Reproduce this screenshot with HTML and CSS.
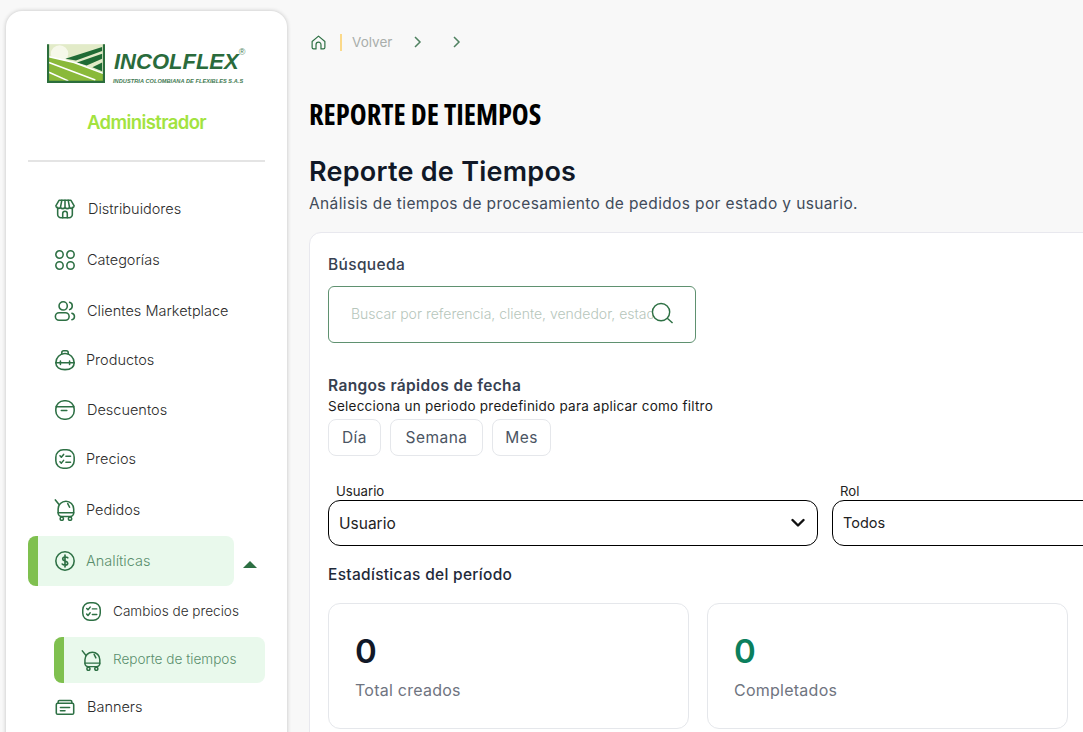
FILE: index.html
```html
<!DOCTYPE html>
<html lang="es">
<head>
<meta charset="utf-8">
<title>Reporte de Tiempos</title>
<link rel="stylesheet" href="styles.css">
</head>
<body>
<div class="app">
  <aside class="sidebar">
    <div class="brand">
      <svg class="brand-mark" viewBox="0 0 60 40" aria-hidden="true">
        <rect width="60" height="40" fill="#e2ebc8"/>
        <circle cx="13" cy="10" r="9" fill="#f6f8ea"/>
        <path d="M2 13 L28 19 L58 29 V38 H2Z" fill="#8ab93a"/>
        <path d="M19 15 L57 3 V7 L30 17Z M31 19 L57 10 V15 L41 22Z M47 24 L57 19 V28Z" fill="#1f6b35"/>
        <path d="M2 19 L50 37 M2 29 L22 38 M2 13 L28 19 L58 30" stroke="#fff" stroke-width="1.6" fill="none"/>
        <path d="M1 0V39H59V0" fill="none" stroke="#2b6e3c" stroke-width="2.4"/>
      </svg>
      <div class="brand-text">
        <div class="brand-name">INCOLFLEX<sup class="brand-reg">®</sup></div>
        <div class="brand-tag">INDUSTRIA COLOMBIANA DE FLEXIBLES S.A.S</div>
      </div>
    </div>
    <div class="role">Administrador</div>
    <hr class="rule">
    <nav class="nav">
      <a class="row">
        <svg class="ico" viewBox="0 0 24 24"><path d="M4 10V18a3.500 3.500 0 0 0 3.500 3.500h9A3.500 3.500 0 0 0 20 18V10"/><path d="M5.500 2.500h13L22 8.500a3 3 0 0 1-5 2 3.400 3.400 0 0 1-5 0 3.400 3.400 0 0 1-5 0 3 3 0 0 1-5-2Z"/><path d="M7 10.500 8.500 2.500M17 10.500 15.500 2.500M12 10.500V2.500"/><path d="M9.500 21.500V17a2.500 2.500 0 0 1 5 0v4.500"/></svg>
        <span class="lbl lbl-wide">Distribuidores</span>
      </a>
      <a class="row shift-1">
        <svg class="ico" viewBox="0 0 24 24"><circle cx="6" cy="6" r="4"/><circle cx="18" cy="6" r="4"/><circle cx="6" cy="18" r="4"/><circle cx="18" cy="18" r="4"/></svg>
        <span class="lbl">Categorías</span>
      </a>
      <a class="row shift-1">
        <svg class="ico" viewBox="0 0 24 24"><circle cx="10" cy="6.500" r="4.500"/><path d="M17 2.500a4.200 4.200 0 0 1 0 8"/><rect x="1.500" y="14" width="15" height="8" rx="4"/><path d="M19.500 14.500c4 1 3.500 6.500 0 7"/></svg>
        <span class="lbl">Clientes Marketplace</span>
      </a>
      <a class="row shift-back">
        <svg class="ico" viewBox="0 0 24 24"><path d="M2 15a10 10 0 0 1 20 0c0 5-4 7.500-10 7.500S2 20 2 15Z"/><path d="M8.500 5.800V4a2 2 0 0 1 2-2h3a2 2 0 0 1 2 2v1.800"/><path d="M2 15h20M7 13v4M17 13v4"/></svg>
        <span class="lbl lbl-tight">Productos</span>
      </a>
      <a class="row">
        <svg class="ico" viewBox="0 0 24 24"><rect x="2" y="2" width="20" height="20" rx="9"/><path d="M2.500 8.500h19M8 12.500h6"/></svg>
        <span class="lbl">Descuentos</span>
      </a>
      <a class="row shift-back">
        <svg class="ico" viewBox="0 0 24 24"><rect x="2" y="2" width="20" height="20" rx="8"/><path d="M6.500 8.500l1.500 1.500 2.500-3M6.500 15l1.500 1.500 2.500-3M13 9h5M13 15.500h5"/></svg>
        <span class="lbl lbl-tight">Precios</span>
      </a>
      <a class="row shift-1">
        <svg class="ico" viewBox="0 0 24 24"><path d="M1.500 1 5.500 6"/><path d="M4.500 11a8.500 8.500 0 0 1 17 0v4a4 4 0 0 1-4 4h-9a4 4 0 0 1-4-4Z"/><path d="M4.500 15h17M15 5l2 4"/><circle cx="8.500" cy="21.500" r="1.800"/><circle cx="17.500" cy="21.500" r="1.800"/></svg>
        <span class="lbl lbl-tight">Pedidos</span>
      </a>
      <div class="group">
        <a class="row row-active">
          <svg class="ico" viewBox="0 0 24 24"><circle cx="12" cy="12" r="10"/><path d="M15 8.500c-1-1.200-5.500-1.500-5.500 1.200S15 11.800 15 14.500s-5 2.200-6 .8M12 5.500v13" stroke-width="1.800"/></svg>
          <span class="lbl lbl-active lbl-tight">Analíticas</span>
        </a>
        <span class="caret"></span>
      </div>
      <a class="row sub">
        <svg class="ico ico-sub" viewBox="0 0 24 24"><rect x="2" y="2" width="20" height="20" rx="8"/><path d="M6.500 8.500l1.500 1.500 2.500-3M6.500 15l1.500 1.500 2.500-3M13 9h5M13 15.500h5"/></svg>
        <span class="lbl lbl-sub">Cambios de precios</span>
      </a>
      <a class="row sub sub-active">
        <svg class="ico ico-sub" viewBox="0 0 24 24"><path d="M1.500 1 5.500 6"/><path d="M4.500 11a8.500 8.500 0 0 1 17 0v4a4 4 0 0 1-4 4h-9a4 4 0 0 1-4-4Z"/><path d="M4.500 15h17M15 5l2 4"/><circle cx="8.500" cy="21.500" r="1.800"/><circle cx="17.500" cy="21.500" r="1.800"/></svg>
        <span class="lbl lbl-sub lbl-active">Reporte de tiempos</span>
      </a>
      <a class="row row-last">
        <svg class="ico" viewBox="0 0 24 24"><rect x="2.500" y="8" width="19" height="12" rx="1.500"/><path d="M4.500 8V6.500A1.500 1.500 0 0 1 6 5h12a1.500 1.500 0 0 1 1.500 1.500V8M7 12.500h10M7 16h5"/></svg>
        <span class="lbl">Banners</span>
      </a>
    </nav>
  </aside>

  <main class="main">
    <div class="crumbs">
      <svg class="crumb-home" viewBox="0 0 24 24"><path d="M3 10.500 12 3l9 7.500V19a2 2 0 0 1-2 2h-3.500v-6a3.500 3.500 0 0 0-7 0v6H5a2 2 0 0 1-2-2Z"/></svg>
      <span class="crumb-bar"></span>
      <span class="crumb-link">Volver</span>
      <svg class="crumb-chev" viewBox="0 0 10 14"><path d="M2 2l5 5-5 5"/></svg>
      <svg class="crumb-chev crumb-chev-2" viewBox="0 0 10 14"><path d="M2 2l5 5-5 5"/></svg>
    </div>
    <h1 class="title">REPORTE DE TIEMPOS</h1>
    <h2 class="heading">Reporte de Tiempos</h2>
    <p class="lead">Análisis de tiempos de procesamiento de pedidos por estado y usuario.</p>

    <section class="panel">
      <div class="field-label">Búsqueda</div>
      <div class="search">
        <span class="search-text">Buscar por referencia, cliente, vendedor, estado</span>
        <svg class="search-ico" viewBox="0 0 24 24"><circle cx="10.500" cy="10.500" r="9"/><path d="M17 17l5.500 5"/></svg>
      </div>
      <div class="ranges-title">Rangos rápidos de fecha</div>
      <div class="ranges-note">Selecciona un periodo predefinido para aplicar como filtro</div>
      <div class="chips">
        <button class="chip chip-dia">Día</button>
        <button class="chip chip-sem">Semana</button>
        <button class="chip chip-mes">Mes</button>
      </div>
      <div class="filters">
        <div class="filter filter-user">
          <label class="filter-label">Usuario</label>
          <div class="select">
            <span class="select-user">Usuario</span>
            <svg class="select-chev" viewBox="0 0 14 10"><path d="M1.500 2 7 7.500 12.500 2"/></svg>
          </div>
        </div>
        <div class="filter filter-rol">
          <label class="filter-label">Rol</label>
          <div class="select select-rol"><span>Todos</span></div>
        </div>
      </div>
      <div class="stats-title">Estadísticas del período</div>
      <div class="stats">
        <div class="stat">
          <div class="stat-num">0</div>
          <div class="stat-label">Total creados</div>
        </div>
        <div class="stat">
          <div class="stat-num stat-green">0</div>
          <div class="stat-label">Completados</div>
        </div>
      </div>
    </section>
  </main>
</div>
</body>
</html>
```
FILE: styles.css
```css
* { box-sizing: border-box; }
html, body { margin: 0; height: 100%; overflow: hidden; }
body { background: #f8f8f8; font-family: "Inter", "Open Sans", sans-serif; color: #1f2937; }
.app { display: flex; align-items: flex-start; height: 732px; overflow: hidden; }

.sidebar { flex: 0 0 281px; margin: 11px 0 0 6px; height: 760px; background: #fff; border-radius: 16px; box-shadow: 0 0 4px rgba(0,0,0,.22); padding: 33px 22px 0; }
.brand { display: flex; align-items: flex-start; padding-left: 19px; height: 40px; }
.brand-mark { width: 58px; height: 39px; flex: none; }
.brand-text { margin-left: 9px; padding-top: 6px; }
.brand-name { font: italic 700 22px/24px "Liberation Sans", sans-serif; color: #2a6b3c; white-space: nowrap; position: relative; }
.brand-reg { font: 400 9px/9px "Liberation Sans", sans-serif; color: #4d7f5c; position: absolute; top: -2px; margin-left: 0; }
.brand-tag { font: italic 700 5.600px/7px "Liberation Sans", sans-serif; color: #3f7a52; margin: 4px 0 0 -1px; white-space: nowrap; letter-spacing: .06px; }
.role { margin-top: 26px; text-align: center; font-weight: 600; font-size: 18.500px; line-height: 24px; color: #a2e33f; letter-spacing: -.6px; }
.rule { margin: 26px 0 0; border: 0; height: 2px; background: #e4e4e4; }

.nav { display: flex; flex-direction: column; margin-top: 22px; }
.row { display: flex; align-items: center; height: 50px; padding-left: 26px; gap: 11px; }
.shift-1 { margin-top: 1px; }
.shift-back { margin-top: -1px; }
.ico { width: 22px; height: 22px; flex: none; fill: none; stroke: #2d7044; stroke-width: 1.700; stroke-linecap: round; stroke-linejoin: round; }
.lbl { font-size: 14.500px; font-weight: 300; color: #2b2b2b; white-space: nowrap; padding-bottom: 2px; }
.lbl-wide { margin-left: 1px; }
.lbl-tight { margin-left: -1px; }
.group { display: flex; align-items: center; }
.row-active { width: 206px; background: #e9f9ec; border-left: 10px solid #7fc04f; border-radius: 8px; padding-left: 16px; gap: 11px; margin-top: 1px; }
.lbl-active { color: #5a8f6c; }
.caret { width: 0; height: 0; margin: 7px 0 0 9px; border-left: 7px solid transparent; border-right: 7px solid transparent; border-bottom: 7px solid #2d6f43; }
.sub { padding-left: 53px; height: 51px; }
.ico-sub { width: 21px; height: 21px; }
.lbl-sub { font-size: 13.600px; }
.sub-active { height: 46px; background: #e9f9ec; border-left: 10px solid #7fc04f; border-radius: 8px; margin-left: 26px; padding-left: 17px; }
.row-last { margin-top: -1px; }

.main { flex: 0 0 auto; width: 800px; margin-left: 22px; }
.crumbs { display: flex; align-items: center; height: 18px; margin-top: 33px; padding-left: 1px; }
.crumb-home { width: 17px; height: 17px; fill: none; stroke: #2d7044; stroke-width: 1.700; stroke-linejoin: round; }
.crumb-bar { width: 2px; height: 17px; background: #fbd98a; margin-left: 13px; }
.crumb-link { margin-left: 10px; font-size: 13.500px; color: #a9aeab; }
.crumb-chev { width: 10px; height: 14px; fill: none; stroke: #4f8160; stroke-width: 1.500; margin-left: 21px; }
.crumb-chev-2 { margin-left: 29px; }
.title { margin: 45px 0 0; font-family: "Open Sans", sans-serif; font-stretch: 75%; font-weight: 700; font-size: 28.500px; line-height: 36px; color: #000; }
.heading { margin: 22px 0 0; font-weight: 600; font-size: 27px; line-height: 36px; color: #111827; letter-spacing: .25px; }
.lead { margin: 4px 0 0; font-size: 15.500px; line-height: 20px; color: #414b5a; font-weight: 400; letter-spacing: .37px; white-space: nowrap; }

.panel { margin-top: 18px; background: #fff; border: 1px solid #e8e8ee; border-radius: 12px; padding: 21px 18px 0; height: 520px; }
.field-label { font-weight: 500; font-size: 15.500px; line-height: 22px; color: #374151; letter-spacing: .35px; }
.search { display: flex; align-items: center; width: 368px; height: 57px; margin-top: 10px; border: 1px solid #5f9170; border-radius: 6px; padding-left: 22px; position: relative; }
.search-text { font-size: 14px; font-weight: 300; color: #b6c6bb; white-space: nowrap; overflow: hidden; width: 302px; padding-bottom: 2px; }
.search-ico { position: absolute; left: 322px; top: 15px; width: 23px; height: 23px; fill: none; stroke: #2d7044; stroke-width: 1.500; }
.ranges-title { margin-top: 32px; font-weight: 600; font-size: 15.500px; line-height: 22px; color: #374151; letter-spacing: .35px; }
.ranges-note { font-size: 13.500px; line-height: 18px; color: #1a1a1a; white-space: nowrap; letter-spacing: .24px; }
.chips { display: flex; gap: 9px; margin-top: 4px; }
.chip { height: 37px; background: #fff; border: 1px solid #e5e7eb; border-radius: 8px; font: 400 15.500px "Inter", sans-serif; letter-spacing: .5px; color: #4b5563; padding: 0; }
.chip-dia { width: 53px; }
.chip-sem { width: 93px; }
.chip-mes { width: 59px; }
.filters { display: flex; gap: 14px; margin-top: 26px; }
.filter { display: flex; flex-direction: column; flex: none; }
.filter-user { width: 490px; }
.filter-rol { width: 300px; }
.filter-label { font-size: 13.200px; font-weight: 400; line-height: 18px; color: #222; padding-left: 8px; }
.select { display: flex; align-items: center; justify-content: space-between; height: 46px; border: 1px solid #000; border-radius: 12px; padding: 0 10px; font-size: 14.500px; color: #222; }
.select-user { font-size: 15.500px; }
.select-chev { width: 14px; height: 10px; margin-right: 2px; fill: none; stroke: #111; stroke-width: 2.400; stroke-linecap: round; stroke-linejoin: round; }
.select-rol { padding-bottom: 2px; }
.stats-title { margin-top: 18px; font-weight: 500; font-size: 15.500px; line-height: 22px; color: #1f2a3a; letter-spacing: .3px; }
.stats { display: flex; gap: 18px; margin-top: 17px; }
.stat { flex: 0 0 361px; height: 126px; border: 1px solid #e5e7eb; border-radius: 12px; padding: 26px 26px 0; }
.stat-num { font-weight: 600; font-size: 33px; line-height: 42px; color: #111827; }
.stat-green { color: #0b7f5d; }
.stat-label { margin-top: 7px; font-size: 16px; font-weight: 400; line-height: 22px; color: #6f7480; letter-spacing: .25px; }
```
